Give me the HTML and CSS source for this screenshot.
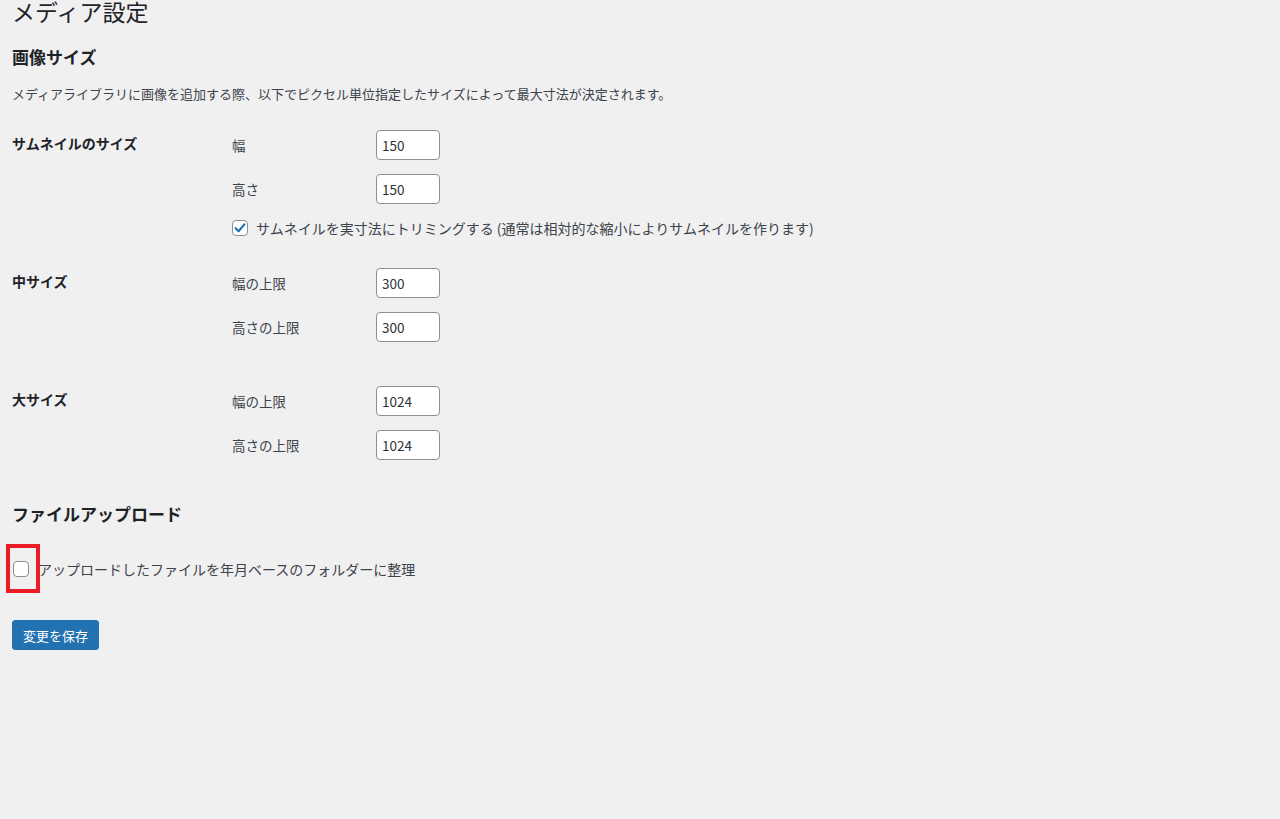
FILE: index.html
```html
<!DOCTYPE html>
<html lang="ja">
<head>
<meta charset="utf-8">
<title>メディア設定</title>
<link rel="stylesheet" href="styles.css">
</head>
<body>
<div class="wrap">
  <h1 class="title">メディア設定</h1>
  <h2 class="section-title first">画像サイズ</h2>
  <p class="desc">メディアライブラリに画像を追加する際、以下でピクセル単位指定したサイズによって最大寸法が決定されます。</p>

  <div class="size-group thumb">
    <div class="group-label">サムネイルのサイズ</div>
    <div class="fields">
      <div class="field"><span class="field-label">幅</span><input class="num" type="text" value="150"></div>
      <div class="field"><span class="field-label">高さ</span><input class="num" type="text" value="150"></div>
      <label class="check-row"><span class="cb checked"><svg viewBox="0 0 16 16" width="16" height="16"><path d="M3.6 8.2 L6.6 11.2 L12.4 4.4" fill="none" stroke="#2271b1" stroke-width="2.2" stroke-linecap="round" stroke-linejoin="round"/></svg></span><span>サムネイルを実寸法にトリミングする (通常は相対的な縮小によりサムネイルを作ります)</span></label>
    </div>
  </div>

  <div class="size-group medium">
    <div class="group-label">中サイズ</div>
    <div class="fields">
      <div class="field"><span class="field-label">幅の上限</span><input class="num" type="text" value="300"></div>
      <div class="field"><span class="field-label">高さの上限</span><input class="num" type="text" value="300"></div>
    </div>
  </div>

  <div class="size-group large">
    <div class="group-label">大サイズ</div>
    <div class="fields">
      <div class="field"><span class="field-label">幅の上限</span><input class="num" type="text" value="1024"></div>
      <div class="field"><span class="field-label">高さの上限</span><input class="num" type="text" value="1024"></div>
    </div>
  </div>

  <h2 class="section-title upload">ファイルアップロード</h2>
  <div class="upload-row">
    <span class="highlight"><span class="cb"></span></span>
    <span class="upload-text">アップロードしたファイルを年月ベースのフォルダーに整理</span>
  </div>

  <div class="submit-row"><button class="btn" type="button">変更を保存</button></div>
</div>
</body>
</html>
```

FILE: styles.css
```css
html, body {
  margin: 0;
  padding: 0;
  background: #f0f0f1;
}
body {
  font-family: "Noto Sans CJK JP", "Noto Sans", sans-serif;
  font-size: 13px;
  color: #3c434a;
  height: 819px;
}
.wrap {
  padding-left: 12px;
}
.title {
  margin: 0;
  font-size: 23px;
  font-weight: 400;
  line-height: 26px;
  color: #1d2327;
  position: relative;
  top: -2px;
}
.section-title {
  margin: 0;
  font-size: 17px;
  font-weight: 700;
  color: #1d2327;
  line-height: 24px;
}
.section-title.first {
  margin-top: 19px;
}
.desc {
  margin: 15px 0 0;
  font-size: 13px;
  line-height: 20px;
  color: #3c434a;
}
.size-group {
  display: grid;
  grid-template-columns: 220px 1fr;
}
.size-group.thumb { margin-top: 26px; }
.size-group.medium { margin-top: 32px; }
.size-group.large { margin-top: 44px; }
.group-label {
  font-weight: 700;
  font-size: 14px;
  color: #1d2327;
  line-height: 30px;
  margin-top: -2px;
}
.fields {
  display: flex;
  flex-direction: column;
  gap: 14px;
}
.field {
  display: flex;
  align-items: center;
  height: 30px;
}
.field-label {
  width: 144px;
  font-size: 13.5px;
  color: #3c434a;
}
.num {
  box-sizing: border-box;
  width: 64px;
  height: 30px;
  border: 1px solid #8c8f94;
  border-radius: 4px;
  background: #fff;
  padding: 0 5px;
  font-family: "Noto Sans CJK JP", "Noto Sans", sans-serif;
  font-size: 13.5px;
  color: #2c3338;
  outline: none;
}
.check-row {
  display: flex;
  align-items: center;
  gap: 8px;
  height: 16px;
  margin-top: 2px;
  font-size: 14px;
  color: #3c434a;
}
.cb {
  box-sizing: border-box;
  display: inline-block;
  width: 16px;
  height: 16px;
  border: 1px solid #8c8f94;
  border-radius: 4px;
  background: #fff;
  position: relative;
  flex: none;
}
.cb svg {
  position: absolute;
  left: -1px;
  top: -1px;
}
.section-title.upload {
  margin-top: 42px;
}
.upload-row {
  display: flex;
  align-items: center;
  margin-top: 18px;
  margin-left: -6px;
}
.highlight {
  box-sizing: border-box;
  width: 34px;
  height: 49px;
  border: 4px solid #ec1c24;
  display: flex;
  align-items: center;
  padding-left: 3px;
}
.upload-text {
  margin-left: -2px;
  font-size: 14px;
  color: #3c434a;
}
.submit-row {
  margin-top: 27px;
}
.btn {
  box-sizing: border-box;
  height: 30px;
  width: 87px;
  padding: 0;
  background: #2271b1;
  border: 1px solid #2271b1;
  border-radius: 3px;
  color: #fff;
  font-family: "Noto Sans CJK JP", "Noto Sans", sans-serif;
  font-size: 13px;
  cursor: pointer;
}
```
